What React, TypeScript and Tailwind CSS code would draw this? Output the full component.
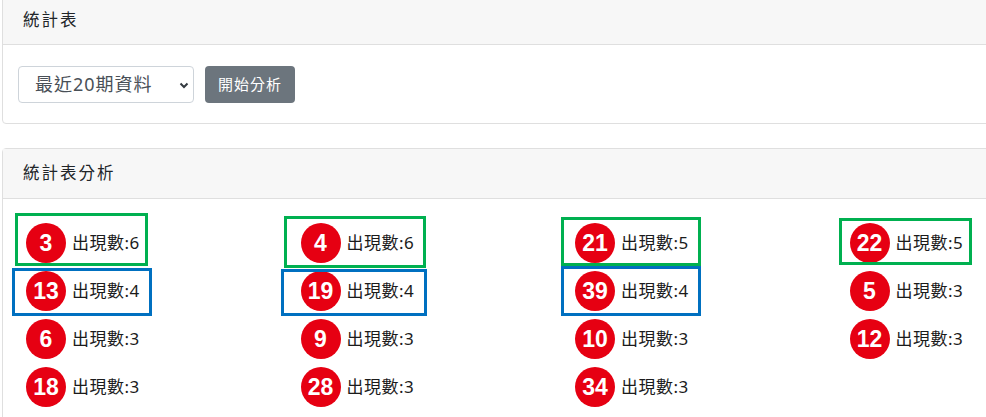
const cjk = "font-['Noto_Sans','Noto_Sans_CJK_TC',sans-serif]";

type Stat = { num: number; count: number; box?: string };

// 出現次數統計（依次數排序）
const stats: Stat[] = [
  { num: 3, count: 6, box: "border-[#00b050] left-[-8px] top-[-6px] w-[133px] h-[53px]" },
  { num: 4, count: 6, box: "border-[#00b050] left-[-14px] top-[-3px] w-[142px] h-[52px]" },
  { num: 21, count: 5, box: "border-[#00b050] left-[-11px] top-[-2px] w-[140px] h-[49px]" },
  { num: 22, count: 5, box: "border-[#00b050] left-[-8px] top-[-1px] w-[133px] h-[47px]" },
  { num: 13, count: 4, box: "border-[#0070c0] left-[-11px] top-[1px] w-[140px] h-[48px]" },
  { num: 19, count: 4, box: "border-[#0070c0] left-[-17px] top-[2px] w-[146px] h-[47px]" },
  { num: 39, count: 4, box: "border-[#0070c0] left-[-11px] top-[-1px] w-[140px] h-[50px]" },
  { num: 5, count: 3 },
  { num: 6, count: 3 },
  { num: 9, count: 3 },
  { num: 10, count: 3 },
  { num: 12, count: 3 },
  { num: 18, count: 3 },
  { num: 28, count: 3 },
  { num: 34, count: 3 },
];

function Ball({ num }: { num: number }) {
  return (
    <div className="w-10 h-10 rounded-full bg-[#e60012] flex items-center justify-center text-white font-bold text-[23px] font-['Liberation_Sans',Arial,sans-serif]">
      {num}
    </div>
  );
}

export default function App() {
  return (
    <div className={`min-h-screen bg-white overflow-hidden ${cjk} text-[#212529]`}>
      <div className="mt-[-5px] ml-[2px] w-[1200px]">
        {/* 統計表 */}
        <div className="border border-[#dfdfdf] rounded bg-white">
          <div className="h-[49px] flex items-center px-5 bg-[#f7f7f7] border-b border-[#dfdfdf] text-[16.5px] tracking-[2px]">
            統計表
          </div>
          <div className="h-[78px] flex items-center px-[15px] gap-[11px]">
            <div className="w-[176px] h-[37px] border border-[#ced4da] rounded bg-white flex items-center justify-between pl-4 pr-[4px] text-[#495057] text-[18px] tracking-[1px]">
              <span>最近20期資料</span>
              <svg width="10" height="8" viewBox="0 0 10 8" className="mt-[1px]">
                <path d="M1.5 2.5 L5 6 L8.5 2.5" fill="none" stroke="#343a40" strokeWidth="2" />
              </svg>
            </div>
            <button className="w-[90px] h-[37px] rounded bg-[#6c757d] text-white text-[15px] tracking-[1px]">
              開始分析
            </button>
          </div>
        </div>

        {/* 統計表分析 */}
        <div className="mt-6 border border-[#dfdfdf] rounded bg-white">
          <div className="h-[50px] flex items-center px-5 bg-[#f7f7f7] border-b border-[#dfdfdf] text-[16.5px] tracking-[2px]">
            統計表分析
          </div>
          <div className="px-5 pt-5 pb-4 grid grid-cols-[repeat(4,274.5px)]">
            {stats.map((s) => (
              <div key={s.num} className="relative h-12 flex items-center pl-[3px] gap-[6px]">
                {s.box && <div className={`absolute border-[3px] pointer-events-none ${s.box}`} />}
                <Ball num={s.num} />
                <span className="text-[17px] tracking-[0.5px] text-[#1b1b1b]">出現數:{s.count}</span>
              </div>
            ))}
          </div>
        </div>
      </div>
    </div>
  );
}
